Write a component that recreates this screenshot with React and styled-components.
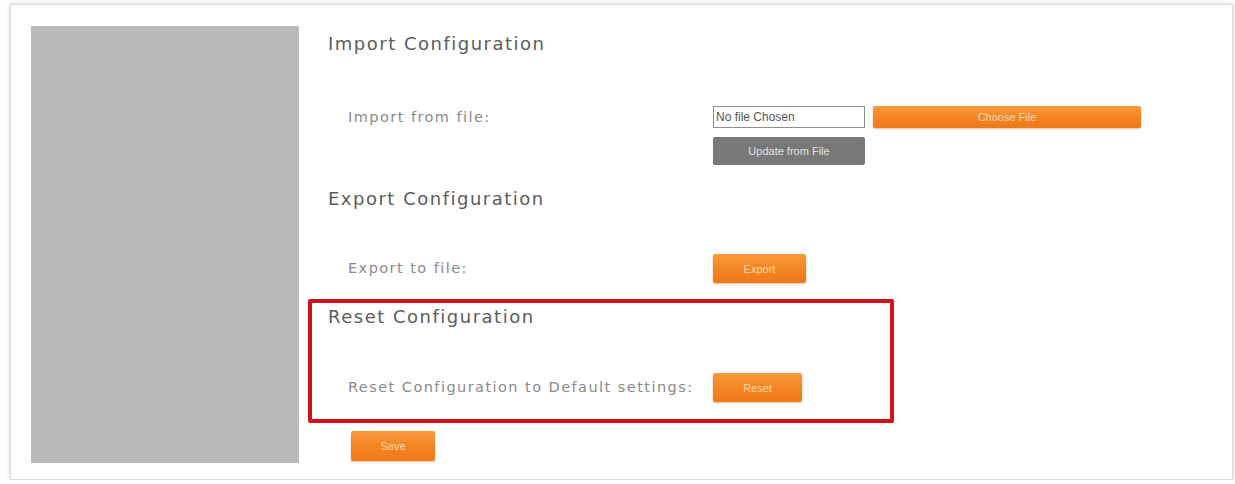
import styled, { createGlobalStyle } from "styled-components";

const GlobalStyle = createGlobalStyle`
  html, body {
    margin: 0;
    padding: 0;
    background: #ffffff;
  }
  body {
    font-family: "DejaVu Sans", Verdana, sans-serif;
  }
`;

const Frame = styled.div`
  box-sizing: border-box;
  width: 1223px;
  height: 476px;
  margin: 4px 0 0 10px;
  padding: 21px 0 0 20px;
  display: flex;
  align-items: flex-start;
  background: #ffffff;
  border: 1px solid #dcdcdc;
  box-shadow: 0 0 4px rgba(0, 0, 0, 0.22);
`;

const Sidebar = styled.div`
  flex: none;
  width: 268px;
  height: 437px;
  background: #bababa;
`;

const Content = styled.div`
  display: flex;
  flex-direction: column;
  align-items: flex-start;
  padding-left: 9px;
`;

const Section = styled.div`
  box-sizing: border-box;
  width: ${(p) => (p.$highlight ? "586px" : "auto")};
  padding: 4px 16px ${(p) => (p.$highlight ? "17px" : "0")};
  border: 4px solid ${(p) => (p.$highlight ? "#d3111b" : "transparent")};
  border-radius: 2px;
  & + & {
    margin-top: 12px;
  }
`;

const Heading = styled.h2`
  margin: 0;
  font-size: 18px;
  line-height: 20px;
  font-weight: normal;
  color: #5c5c5c;
  letter-spacing: 1.5px;
`;

const Row = styled.div`
  display: grid;
  grid-template-columns: 365px auto;
  align-items: start;
  margin-top: ${(p) => p.$top}px;
  padding-left: 20px;
`;

const Label = styled.div`
  font-size: 14.5px;
  line-height: ${(p) => p.$line}px;
  color: #8a8a8a;
  letter-spacing: 1.45px;
  white-space: nowrap;
`;

const Controls = styled.div`
  display: flex;
  flex-direction: column;
  gap: 9px;
`;

const Line = styled.div`
  display: flex;
  align-items: center;
  gap: 8px;
`;

const FileBox = styled.div`
  box-sizing: border-box;
  width: 152px;
  height: 22px;
  padding-left: 2px;
  border: 1px solid #8e8e8e;
  font-family: "Liberation Sans", Arial, sans-serif;
  font-size: 12px;
  line-height: 20px;
  color: #555555;
`;

const Button = styled.button`
  box-sizing: border-box;
  width: ${(p) => p.$w}px;
  height: ${(p) => p.$h}px;
  margin-left: ${(p) => p.$left || 0}px;
  padding: 0;
  border: none;
  border-radius: 2px;
  font-family: "Liberation Sans", Arial, sans-serif;
  font-size: 11px;
  cursor: pointer;
  color: ${(p) => (p.$gray ? "#e2e2e2" : "#fbd9b0")};
  background: ${(p) =>
    p.$gray
      ? "#787878"
      : "linear-gradient(#f99a3e, #f3821f 60%, #ee7a19)"};
  box-shadow: ${(p) =>
    p.$gray ? "none" : "0 1px 2px rgba(200, 110, 30, 0.45)"};
`;

export default function App() {
  return (
    <>
      <GlobalStyle />
      <Frame>
        <Sidebar />
        <Content>
          <Section>
            <Heading>Import Configuration</Heading>
            <Row $top={52}>
              <Label $line={22}>Import from file:</Label>
              <Controls>
                <Line>
                  <FileBox>No file Chosen</FileBox>
                  <Button $w={268} $h={22}>Choose File</Button>
                </Line>
                <Button $gray $w={152} $h={28}>Update from File</Button>
              </Controls>
            </Row>
          </Section>

          <Section>
            <Heading>Export Configuration</Heading>
            <Row $top={45}>
              <Label $line={29}>Export to file:</Label>
              <Button $w={93} $h={29}>Export</Button>
            </Row>
          </Section>

          <Section $highlight>
            <Heading>Reset Configuration</Heading>
            <Row $top={46}>
              <Label $line={29}>Reset Configuration to Default settings:</Label>
              <Button $w={89} $h={29}>Reset</Button>
            </Row>
          </Section>

          <Button $w={84} $h={30} $left={43} style={{ marginTop: 8 }}>
            Save
          </Button>
        </Content>
      </Frame>
    </>
  );
}
